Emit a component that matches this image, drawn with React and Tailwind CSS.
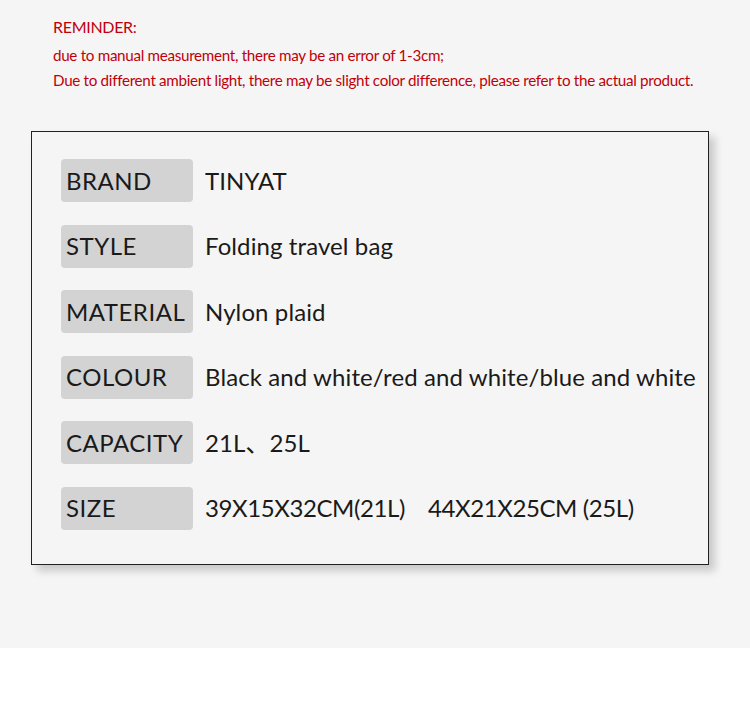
const rows = [
  { label: 'BRAND', value: 'TINYAT' },
  { label: 'STYLE', value: 'Folding travel bag' },
  { label: 'MATERIAL', value: 'Nylon plaid' },
  { label: 'COLOUR', value: 'Black and white/red and white/blue and white' },
  { label: 'CAPACITY', value: '21L、25L' },
  { label: 'SIZE', value: '39X15X32CM(21L)\u00a0\u00a0\u00a0\u00a044X21X25CM (25L)', tight: true },
]

export default function App() {
  return (
    <div className="w-[750px] bg-white" style={{ fontFamily: 'Lato, "Noto Sans CJK SC", sans-serif' }}>
      <div className="h-[648px] bg-[#f5f5f5] pt-[14px]">
        {/* Reminder */}
        <div className="pl-[53px] text-[#c0000a] text-[15.2px] leading-[25px] tracking-[-0.3px]">
          <p className="mb-[4px] text-[16px]">REMINDER:</p>
          <p>due to manual measurement, there may be an error of 1-3cm;</p>
          <p>Due to different ambient light, there may be slight color difference, please refer to the actual product.</p>
        </div>

        {/* Spec table */}
        <div className="ml-[31px] mt-[38px] w-[678px] h-[434px] border border-[#222] bg-[#f5f5f5] shadow-[6px_6px_8px_rgba(0,0,0,0.18)] pt-[27px] pl-[29px]">
          <div className="flex flex-col gap-[22.6px]">
            {rows.map((r) => (
              <div key={r.label} className="flex items-center h-[43px]">
                <div className="w-[132px] h-[43px] shrink-0 rounded-[4px] bg-[#d3d3d3] flex items-center pl-[5px] text-[24px] text-[#1a1a1a] tracking-[0.5px]">
                  {r.label}
                </div>
                <div
                  className={
                    r.tight
                      ? 'ml-[12px] text-[24px] text-[#1a1a1a] whitespace-nowrap tracking-[-0.4px]'
                      : 'ml-[12px] text-[24px] text-[#1a1a1a] whitespace-nowrap tracking-[0.1px]'
                  }
                >
                  {r.value}
                </div>
              </div>
            ))}
          </div>
        </div>
      </div>
    </div>
  )
}
